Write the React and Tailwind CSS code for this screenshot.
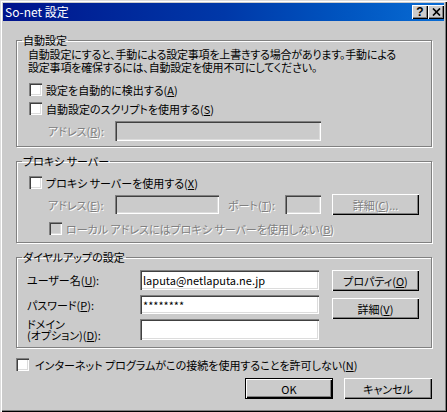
const sunken =
  'shadow-[inset_1px_1px_0_#808080,inset_2px_2px_0_#404040,inset_-1px_-1px_0_#fff,inset_-2px_-2px_0_#dcdcdc]'
const raised =
  'shadow-[inset_1px_1px_0_#fff,inset_-1px_-1px_0_#000,inset_-2px_-2px_0_#808080]'
const etched = 'text-[#808080] [text-shadow:1px_1px_0_#fff]'
const group =
  'border border-[#808080] shadow-[inset_1px_1px_0_#fff,1px_1px_0_#fff] ml-[13px] w-[416px]'

const Mn = ({ children }) => <u className="underline-offset-[1px]">{children}</u>

const Check = ({ disabled, children }) => (
  <div className="flex items-center h-[13px] gap-[4px]">
    <span
      className={`w-[13px] h-[13px] shrink-0 ${sunken} ${disabled ? 'bg-[#cbcbcb]' : 'bg-white'}`}
    />
    <span className={`leading-[14px] whitespace-nowrap ${disabled ? etched : ''}`}>
      {children}
    </span>
  </div>
)

const Field = ({ className = '', disabled, children }) => (
  <div
    className={`${sunken} ${disabled ? 'bg-[#cbcbcb]' : 'bg-white'} flex items-center pl-[3px] leading-[14px] whitespace-nowrap ${className}`}
  >
    {children}
  </div>
)

const Btn = ({ className = '', disabled, isDefault, children }) => (
  <button
    className={`flex items-center justify-center leading-[14px] bg-[#cbcbcb] ${
      isDefault ? `border border-black ${raised}` : raised
    } ${disabled ? etched : ''} ${className}`}
  >
    {children}
  </button>
)

const TitleBtn = ({ children }) => (
  <span
    className={`w-[16px] h-[14px] bg-[#cbcbcb] flex items-center justify-center ${raised}`}
  >
    {children}
  </span>
)

export default function App() {
  return (
    <div className="w-[447px] h-[412px] bg-[#cbcbcb] p-[3px] flex flex-col text-[11px] text-black [font-family:'Noto_Sans_CJK_JP',sans-serif] [font-feature-settings:'palt'] shadow-[inset_1px_1px_0_#dcdcdc,inset_2px_2px_0_#fff,inset_-1px_-1px_0_#000,inset_-2px_-2px_0_#808080]">
      {/* title bar */}
      <div className="h-[18px] flex items-center pl-[2px] bg-linear-to-r from-[#00128c] via-[#0038a8] to-[#0a6cd4]">
        <span className="text-white text-[12px] leading-[14px]">So-net 設定</span>
        <div className="ml-auto flex">
          <TitleBtn>
            <span className="font-bold text-[12px] leading-none [font-family:'Liberation_Sans',sans-serif]">?</span>
          </TitleBtn>
          <TitleBtn>
            <svg width="9" height="8" viewBox="0 0 9 8">
              <path d="M1 0.5 L8 7.5 M8 0.5 L1 7.5" stroke="#000" strokeWidth="1.7" />
            </svg>
          </TitleBtn>
        </div>
      </div>

      {/* auto config */}
      <fieldset className={`${group} mt-[12px] pb-[5px]`}>
        <legend className="ml-[5px] px-[1px] leading-[14px]">自動設定</legend>
        <p className="mt-[1px] ml-[11px] leading-[13px] whitespace-nowrap tracking-[-0.2px]">
          自動設定にすると、手動による設定事項を上書きする場合があります。手動による
          <br />
          設定事項を確保するには、自動設定を使用不可にしてください。
        </p>
        <div className="mt-[9px] ml-[12px]">
          <Check>
            設定を自動的に検出する(<Mn>A</Mn>)
          </Check>
        </div>
        <div className="mt-[6px] ml-[12px]">
          <Check>
            自動設定のスクリプトを使用する(<Mn>S</Mn>)
          </Check>
        </div>
        <div className="mt-[6px] ml-[31px] flex items-center">
          <span className={`w-[67px] leading-[14px] ${etched}`}>
            アドレス(<Mn>R</Mn>):
          </span>
          <Field disabled className="w-[206px] h-[20px]" />
        </div>
      </fieldset>

      {/* proxy */}
      <fieldset className={`${group} mt-[7px] pb-[7px]`}>
        <legend className="ml-[5px] px-[1px] leading-[14px]">プロキシ サーバー</legend>
        <div className="mt-[8px] ml-[12px]">
          <Check>
            プロキシ サーバーを使用する(<Mn>X</Mn>)
          </Check>
        </div>
        <div className="mt-[5px] ml-[31px] h-[21px] flex items-center">
          <span className={`w-[67px] leading-[14px] ${etched}`}>
            アドレス(<Mn>E</Mn>):
          </span>
          <Field disabled className="w-[104px] h-[19px]" />
          <span className={`ml-[9px] w-[57px] leading-[14px] ${etched}`}>
            ポート(<Mn>T</Mn>):
          </span>
          <Field disabled className="w-[36px] h-[19px]" />
          <Btn disabled className="ml-[11px] w-[87px] h-[21px]">
            詳細(<Mn>C</Mn>)...
          </Btn>
        </div>
        <div className="mt-[7px] ml-[32px]">
          <Check disabled>
            ローカル アドレスにはプロキシ サーバーを使用しない(<Mn>B</Mn>)
          </Check>
        </div>
      </fieldset>

      {/* dial-up */}
      <fieldset className={`${group} mt-[7px] pb-[7px]`}>
        <legend className="ml-[5px] px-[1px] leading-[14px]">ダイヤルアップの設定</legend>
        <div className="mt-[6px] ml-[10px] flex">
          <div className="flex flex-col">
            <div className="h-[20px] flex items-center">
              <span className="w-[113px] leading-[14px]">
                ユーザー名(<Mn>U</Mn>):
              </span>
              <Field className="w-[179px] h-[20px]">laputa@netlaputa.ne.jp</Field>
            </div>
            <div className="mt-[5px] h-[19px] flex items-center">
              <span className="w-[113px] leading-[14px]">
                パスワード(<Mn>P</Mn>):
              </span>
              <Field className="w-[179px] h-[19px]">********</Field>
            </div>
            <div className="mt-[5px] h-[21px] flex items-center">
              <span className="w-[113px] leading-[11px] whitespace-nowrap">
                ドメイン
                <br />
                (オプション)(<Mn>D</Mn>):
              </span>
              <Field className="w-[179px] h-[21px]" />
            </div>
          </div>
          <div className="ml-[13px] flex flex-col">
            <Btn className="w-[87px] h-[21px]">
              プロパティ(<Mn>O</Mn>)
            </Btn>
            <Btn className="mt-[7px] w-[87px] h-[21px]">
              詳細(<Mn>V</Mn>)
            </Btn>
          </div>
        </div>
      </fieldset>

      <div className="mt-[10px] ml-[13px] flex items-center h-[13px] gap-[6px]">
        <span className={`w-[13px] h-[13px] bg-white ${sunken}`} />
        <span className="leading-[14px] whitespace-nowrap">
          インターネット プログラムがこの接続を使用することを許可しない(<Mn>N</Mn>)
        </span>
      </div>

      <div className="mt-[7px] pr-[12px] flex justify-end gap-[11px]">
        <Btn isDefault className="w-[88px] h-[21px]">
          OK
        </Btn>
        <Btn className="w-[88px] h-[21px]">キャンセル</Btn>
      </div>
    </div>
  )
}
